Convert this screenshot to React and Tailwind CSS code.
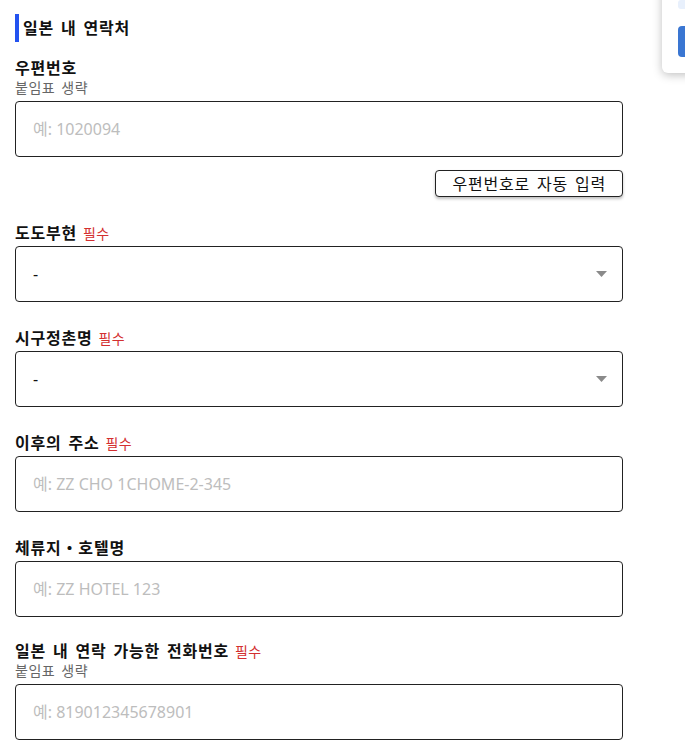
import React from 'react';

const font = { fontFamily: '"Noto Sans", "Noto Sans CJK KR", sans-serif' };

const Required = () => (
  <span className="ml-[6px] text-[14px] font-normal tracking-[0.3px] text-[#d32f2f]">필수</span>
);

const Label = ({ children, required, hint }) => (
  <div className="mb-[3px]">
    <div className="flex h-[20px] items-center whitespace-pre text-[16px] font-bold tracking-[0.8px] text-[#111] [word-spacing:2px]">
      <span>{children}</span>
      {required && <Required />}
    </div>
    {hint && (
      <div className="h-[20px] text-[14px] leading-[20px] tracking-[0.5px] text-[#666] [word-spacing:2px]">
        {hint}
      </div>
    )}
  </div>
);

const TextInput = ({ placeholder }) => (
  <input
    type="text"
    placeholder={placeholder}
    className="block h-[56px] w-full rounded-[4px] border border-[#222] bg-white px-[17px] text-[16px] text-[#111] outline-none placeholder:text-[#bdbdbd]"
  />
);

const SelectBox = () => (
  <div className="relative h-[56px] w-full rounded-[4px] border border-[#222] bg-white">
    <div className="flex h-full items-center px-[17px] text-[16px] text-[#111]">-</div>
    <svg
      className="absolute right-[15px] top-[24px]"
      width="11"
      height="6"
      viewBox="0 0 11 6"
    >
      <path d="M0 0 L11 0 L5.5 6 Z" fill="#8a8a8a" />
    </svg>
  </div>
);

export default function App() {
  return (
    <div className="relative min-h-[750px] w-[685px] overflow-hidden bg-white" style={font}>
      {/* floating panel at top right */}
      <div className="absolute right-[-40px] top-[-20px] h-[93px] w-[63px] rounded-b-[6px] bg-white shadow-[0_2px_10px_rgba(0,0,0,0.25)]">
        <div className="ml-[16px] mt-[20px] h-[9px] w-[40px] rounded-[3px] bg-[#e8f0fc]" />
        <div className="ml-[16px] mt-[17px] h-[31px] w-[40px] rounded-[4px] bg-[#3a76d2]" />
      </div>

      <div className="w-[623px] pl-[15px] pt-[14px]">
        <div className="flex h-[28px] items-center border-l-[4px] border-[#2353f0] pl-[4px]">
          <span className="text-[16px] font-bold tracking-[0.8px] text-[#111] [word-spacing:2px]">
            일본 내 연락처
          </span>
        </div>

        <div className="mt-[16px]">
          <Label hint="붙임표 생략">우편번호</Label>
          <TextInput placeholder="예: 1020094" />
          <div className="mt-[13px] flex justify-end">
            <button className="h-[27px] rounded-[4px] border border-[#222] bg-white px-[16px] text-[16px] leading-none tracking-[0.8px] text-[#111] shadow-[0_2px_3px_rgba(0,0,0,0.25)] [word-spacing:2px]">
              우편번호로 자동 입력
            </button>
          </div>
        </div>

        <div className="mt-[26px]">
          <Label required>도도부현</Label>
          <SelectBox />
        </div>

        <div className="mt-[26px]">
          <Label required>시구정촌명</Label>
          <SelectBox />
        </div>

        <div className="mt-[26px]">
          <Label required>이후의 주소</Label>
          <TextInput placeholder="예: ZZ CHO 1CHOME-2-345" />
        </div>

        <div className="mt-[26px]">
          <Label>체류지・호텔명</Label>
          <TextInput placeholder="예: ZZ HOTEL 123" />
        </div>

        <div className="mt-[24px]">
          <Label required hint="붙임표 생략">일본 내 연락 가능한 전화번호</Label>
          <TextInput placeholder="예: 819012345678901" />
        </div>
      </div>
    </div>
  );
}
